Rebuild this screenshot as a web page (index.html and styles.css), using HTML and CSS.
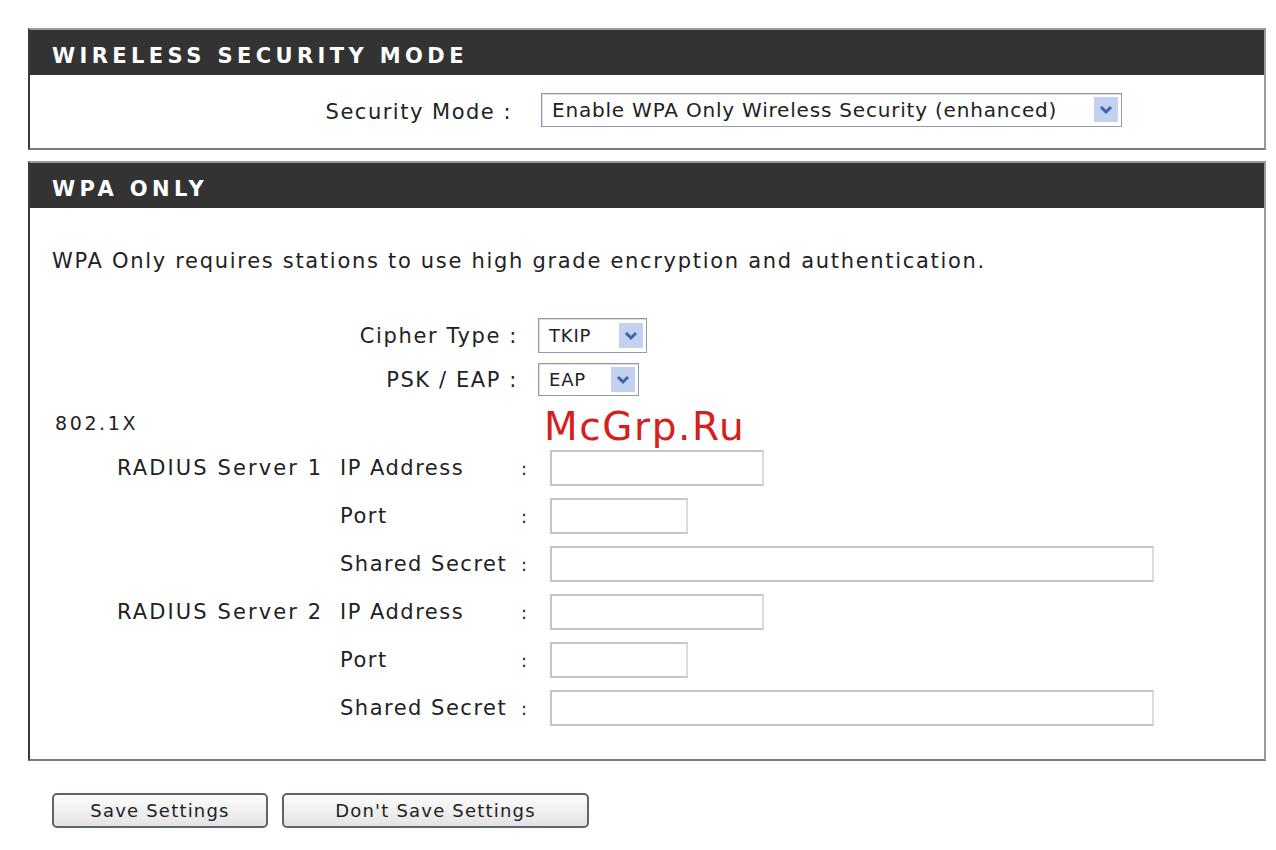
FILE: index.html
```html
<!DOCTYPE html>
<html lang="en">
<head>
    <meta charset="UTF-8">
    <title>Wireless Settings</title>
    <link rel="stylesheet" href="styles.css">
</head>
<body>
    <div class="page">
        <!-- Security mode -->
        <div class="box">
            <div class="box-title">WIRELESS SECURITY MODE</div>
            <div class="box-body mode-body">
                <span class="mode-label">Security Mode :</span>
                <div class="select select-wide">
                    <span class="select-text">Enable WPA Only Wireless Security (enhanced)</span>
                    <span class="select-arrow"><svg width="14" height="10" viewBox="0 0 14 10"><path d="M2 2 L7 7 L12 2" fill="none" stroke="#3f63b0" stroke-width="3"/></svg></span>
                </div>
            </div>
        </div>

        <!-- WPA only -->
        <div class="box">
            <div class="box-title">WPA ONLY</div>
            <div class="box-body wpa-body">
                <p class="intro">WPA Only requires stations to use high grade encryption and authentication.</p>

                <div class="pair-grid">
                    <span class="pair-label">Cipher Type :</span>
                    <div class="select select-cipher">
                        <span class="select-text">TKIP</span>
                        <span class="select-arrow"><svg width="14" height="10" viewBox="0 0 14 10"><path d="M2 2 L7 7 L12 2" fill="none" stroke="#3f63b0" stroke-width="3"/></svg></span>
                    </div>
                    <span class="pair-label">PSK / EAP :</span>
                    <div class="select select-psk">
                        <span class="select-text">EAP</span>
                        <span class="select-arrow"><svg width="14" height="10" viewBox="0 0 14 10"><path d="M2 2 L7 7 L12 2" fill="none" stroke="#3f63b0" stroke-width="3"/></svg></span>
                    </div>
                </div>

                <div class="section-name">802.1X</div>
                <div class="watermark">McGrp.Ru</div>

                <div class="radius-grid">
                    <span class="server">RADIUS Server 1</span>
                    <span class="field">IP Address</span>
                    <span class="colon">:</span>
                    <input type="text" class="txt txt-ip">

                    <span class="server"></span>
                    <span class="field">Port</span>
                    <span class="colon">:</span>
                    <input type="text" class="txt txt-port">

                    <span class="server"></span>
                    <span class="field">Shared Secret</span>
                    <span class="colon">:</span>
                    <input type="text" class="txt txt-secret">

                    <span class="server">RADIUS Server 2</span>
                    <span class="field">IP Address</span>
                    <span class="colon">:</span>
                    <input type="text" class="txt txt-ip">

                    <span class="server"></span>
                    <span class="field">Port</span>
                    <span class="colon">:</span>
                    <input type="text" class="txt txt-port">

                    <span class="server"></span>
                    <span class="field">Shared Secret</span>
                    <span class="colon">:</span>
                    <input type="text" class="txt txt-secret">
                </div>
            </div>
        </div>

        <div class="buttons">
            <button class="btn btn-save">Save Settings</button>
            <button class="btn btn-nosave">Don't Save Settings</button>
        </div>
    </div>
</body>
</html>
```

FILE: styles.css
```css
body {
    margin: 0;
    background: #fff;
    font-family: "DejaVu Sans", Verdana, sans-serif;
    color: #222;
}
.page {
    padding: 28px 10px 0 28px;
}
.box {
    border: 2px solid #9a9a9a;
    border-left-color: #3a3a3a;
    border-bottom-color: #7a7a7a;
    margin-bottom: 11px;
}
.box-title {
    background: #333;
    color: #fff;
    font-weight: bold;
    font-size: 21px;
    letter-spacing: 4.4px;
    height: 45px;
    line-height: 52px;
    padding-left: 22px;
}
.mode-body {
    height: 73px;
    display: grid;
    grid-template-columns: 482px auto;
    column-gap: 29px;
    align-items: center;
    justify-items: start;
}
.mode-label {
    justify-self: end;
    font-size: 21px;
    letter-spacing: 1.5px;
}
.select {
    display: flex;
    align-items: center;
    border: 1px solid #8e9aae;
    box-shadow: inset 1px 1px 0 #d8dde6;
    height: 31px;
    padding-left: 10px;
    padding-right: 3px;
    font-size: 20px;
    box-sizing: border-box;
    background: #fff;
}
.select-text {
    flex: 1;
    letter-spacing: 0.8px;
}
.select-arrow {
    width: 24px;
    height: 25px;
    background: #c3d0ef;
    display: flex;
    align-items: center;
    justify-content: center;
}
.select-wide {
    width: 581px;
    height: 34px;
    margin-top: -4px;
}
.select-cipher {
    width: 109px;
    height: 35px;
}
.select-cipher .select-text,
.select-psk .select-text {
    font-size: 18px;
}
.select-psk {
    width: 101px;
    height: 33px;
}
.wpa-body {
    position: relative;
    padding: 41px 0 33px 22px;
}
.intro {
    margin: 0 0 45px;
    font-size: 21px;
    letter-spacing: 1.7px;
    line-height: 24px;
}
.pair-grid {
    display: grid;
    grid-template-columns: 466px auto;
    column-gap: 20px;
    row-gap: 10px;
    align-items: center;
    justify-items: start;
}
.pair-label {
    justify-self: end;
    font-size: 21px;
    letter-spacing: 1.6px;
}
.section-name {
    font-size: 19px;
    letter-spacing: 2.6px;
    margin: 16px 0 0 3px;
    height: 24px;
}
.watermark {
    position: absolute;
    left: 514px;
    top: 196px;
    color: #d42020;
    font-family: "DejaVu Sans", sans-serif;
    font-size: 39px;
    letter-spacing: 1.6px;
}
.radius-grid {
    display: grid;
    grid-template-columns: 223px 181px 29px auto;
    grid-auto-rows: 36px;
    row-gap: 12px;
    align-items: center;
    justify-items: start;
    padding-left: 65px;
    margin-top: 14px;
    font-size: 21px;
    letter-spacing: 1.5px;
}
.server {
    letter-spacing: 2.1px;
}
.field {
    letter-spacing: 1.5px;
}
.colon {
    font-size: 18px;
}
.txt {
    height: 36px;
    box-sizing: border-box;
    border: 2px solid #c3c7cd;
    border-right-color: #d8dbe0;
    background: #fff;
    margin: 0;
}
.txt-ip {
    width: 214px;
}
.txt-port {
    width: 138px;
}
.txt-secret {
    width: 604px;
}
.buttons {
    display: flex;
    gap: 14px;
    padding: 21px 0 0 24px;
}
.btn {
    height: 35px;
    border: 2px solid #5d6470;
    border-radius: 5px;
    background: linear-gradient(#fdfdfd, #e3e3e3);
    font-family: "DejaVu Sans", Verdana, sans-serif;
    font-size: 18px;
    letter-spacing: 1.2px;
    color: #222;
    cursor: pointer;
}
.btn-save {
    width: 216px;
}
.btn-nosave {
    width: 307px;
}
```
